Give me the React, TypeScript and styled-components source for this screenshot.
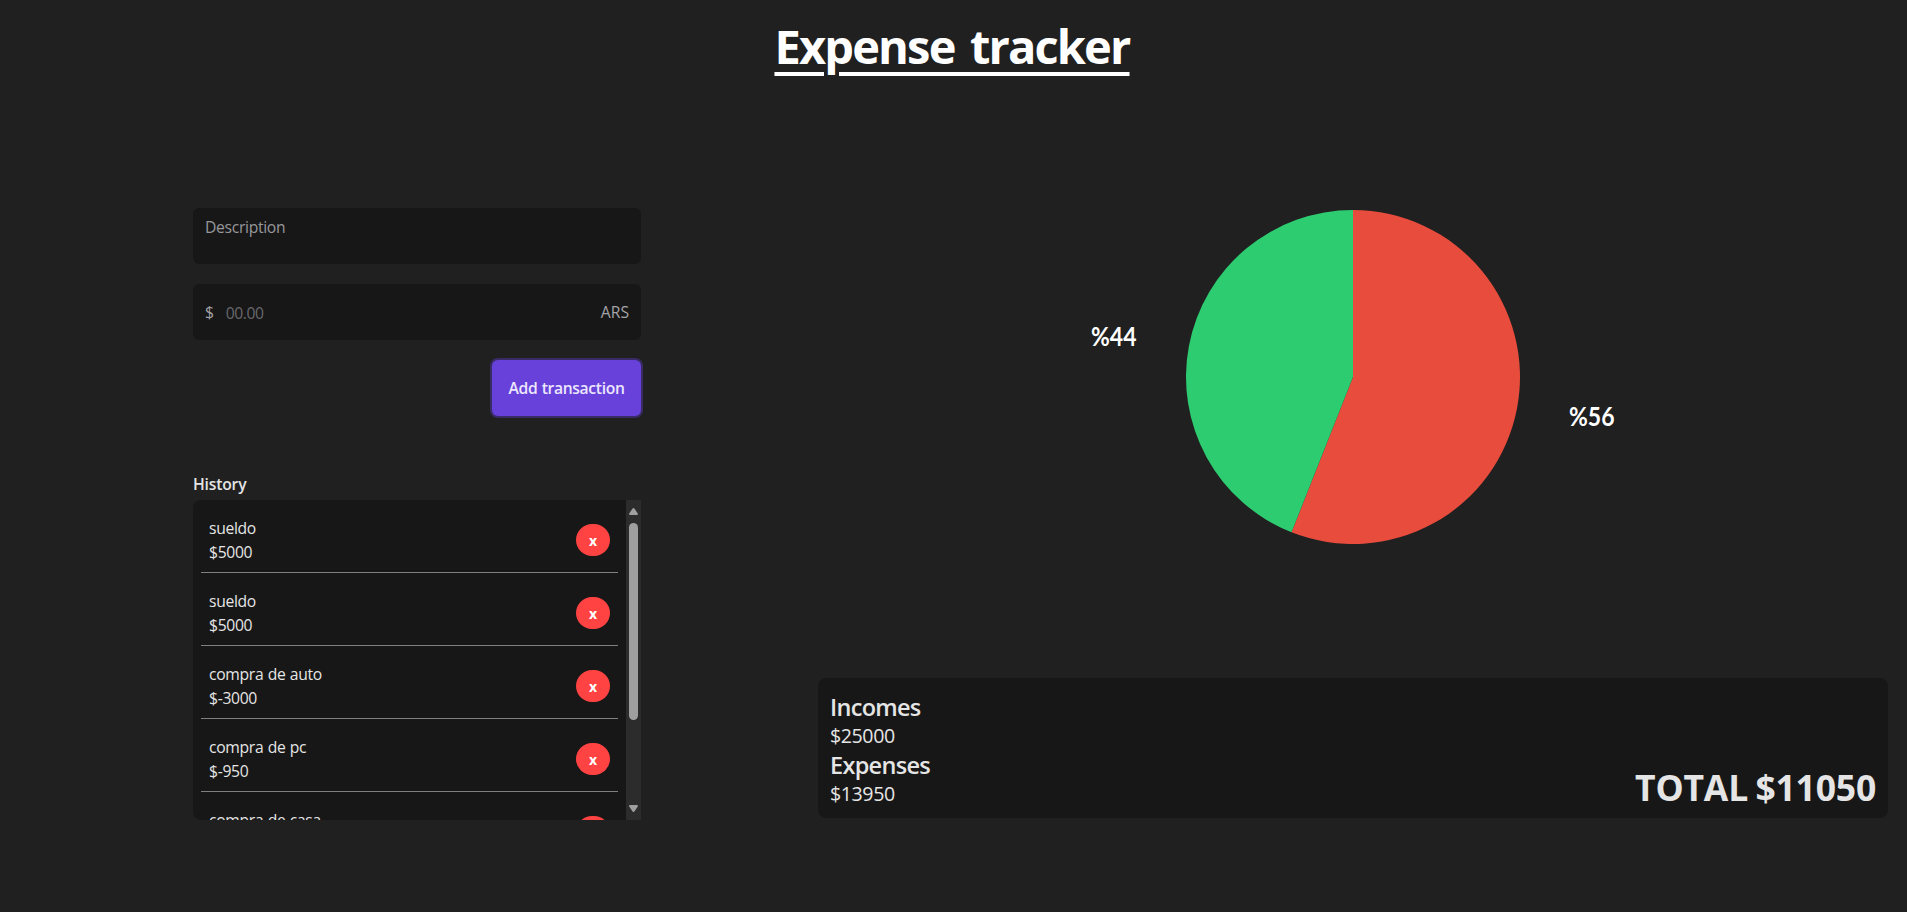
import React from "react";
import styled, { createGlobalStyle } from "styled-components";

const GlobalStyle = createGlobalStyle`
  *, *::before, *::after { box-sizing: border-box; }
  body {
    margin: 0;
    background: #202020;
    color: #e5e5e5;
    font-family: "Open Sans", "Noto Sans", sans-serif;
    font-size: 15.7px;
    line-height: 24px;
    letter-spacing: -0.32px;
    word-spacing: 0.6px;
  }
  h1, h2, h3, p, ul { margin: 0; padding: 0; }
`;

const Page = styled.div`
  min-height: 100vh;
  display: flex;
  flex-direction: column;
`;

const Header = styled.header`
  display: flex;
  justify-content: center;
  padding: 22px 3px 0 0;
  height: 177px;
`;

const Title = styled.h1`
  height: 48px;
  font-size: 47px;
  line-height: 48px;
  font-weight: 700;
  letter-spacing: -1.85px;
  word-spacing: 5px;
  color: #fff;
  text-decoration: underline;
  text-decoration-thickness: 4px;
  text-underline-offset: 8px;
`;

const Main = styled.main`
  display: flex;
  align-items: flex-start;
  gap: 177px;
  padding: 0 19px 0 193px;
`;

const Sidebar = styled.section`
  flex: 0 0 448px;
  display: flex;
  flex-direction: column;
  padding-top: 31px;
`;

const Form = styled.form`
  display: flex;
  flex-direction: column;
  gap: 20px;
  margin-bottom: 56px;
`;

const Description = styled.textarea`
  display: block;
  width: 100%;
  height: 56px;
  padding: 7px 12px;
  border: 0;
  border-radius: 6px;
  background: #171717;
  color: #e5e5e5;
  font: inherit;
  letter-spacing: inherit;
  resize: none;
  overflow: hidden;
  &::placeholder { color: #97979b; opacity: 1; }
`;

const AmountField = styled.label`
  display: flex;
  align-items: center;
  height: 56px;
  padding: 0 12px;
  border-radius: 6px;
  background: #171717;
  color: #a3a3a7;
`;

const AmountInput = styled.input`
  flex: 1;
  min-width: 0;
  margin-left: 12px;
  padding: 2px 0 0;
  border: 0;
  background: transparent;
  color: #e5e5e5;
  font: inherit;
  letter-spacing: -0.4px;
  &::placeholder { color: #68686c; opacity: 1; }
`;

const Currency = styled.span`
  letter-spacing: 0;
`;

const AddButton = styled.button`
  align-self: flex-end;
  width: 149px;
  height: 56px;
  padding: 0;
  border: 0;
  border-radius: 6px;
  background: #6741d9;
  box-shadow: 0 0 0 2px #392b66;
  color: #ece6fd;
  font: inherit;
  font-weight: 600;
  letter-spacing: -0.35px;
  word-spacing: 0.6px;
`;

const HistoryTitle = styled.h3`
  margin-bottom: 4px;
  font-size: 15.7px;
  line-height: 24px;
  font-weight: 600;
  letter-spacing: -0.2px;
`;

const HistoryPanel = styled.div`
  display: flex;
  height: 320px;
  border-radius: 8px 0 0 8px;
  background: #171717;
  overflow: hidden;
`;

const HistoryList = styled.ul`
  flex: 1;
  padding: 0 8px;
  list-style: none;
  overflow: hidden;
`;

const HistoryRow = styled.li`
  display: flex;
  align-items: center;
  justify-content: space-between;
  height: 65px;
  margin-top: 8px;
  padding: 0 8px;
  border-bottom: 1px solid #808080;
`;

const DeleteButton = styled.button`
  width: 34px;
  height: 32px;
  padding: 2px 0 0;
  border: 0;
  border-radius: 16px;
  background: #ff4242;
  color: #fff;
  font: inherit;
  font-size: 14px;
  line-height: 20px;
  font-weight: 700;
`;

const ScrollTrack = styled.div`
  flex: 0 0 15px;
  display: flex;
  flex-direction: column;
  align-items: center;
  padding: 8px 0;
  background: #2c2c2c;
`;

const ScrollArrow = styled.svg`
  display: block;
  width: 9px;
  height: 7px;
  fill: #9f9f9f;
`;

const ScrollThumb = styled.div`
  width: 9px;
  height: 197px;
  margin: 8px 0 auto;
  border-radius: 5px;
  background: #9f9f9f;
`;

const Overview = styled.section`
  flex: 1;
  display: flex;
  flex-direction: column;
  gap: 101px;
`;

const Chart = styled.svg`
  display: block;
  width: 100%;
  height: 400px;
`;

const ChartLabel = styled.text`
  fill: #fff;
  font-family: Lato, "Open Sans", sans-serif;
  font-size: 26px;
  font-weight: 700;
  letter-spacing: 0;
`;

const Summary = styled.div`
  display: flex;
  align-items: flex-end;
  justify-content: space-between;
  height: 140px;
  padding: 12px;
  border-radius: 8px;
  background: #171717;
`;

const SummaryTitle = styled.h2`
  font-size: 23.5px;
  line-height: 34px;
  font-weight: 600;
  letter-spacing: -0.7px;
`;

const SummaryValue = styled.p`
  font-size: 19.6px;
  line-height: 24px;
  letter-spacing: -0.42px;
`;

const Total = styled.p`
  padding-top: 1px;
  font-size: 35.5px;
  line-height: 38px;
  font-weight: 700;
  letter-spacing: -0.2px;
  word-spacing: -1.6px;
`;

const transactions = [
  { name: "sueldo", amount: 5000 },
  { name: "sueldo", amount: 5000 },
  { name: "compra de auto", amount: -3000 },
  { name: "compra de pc", amount: -950 },
  { name: "compra de casa", amount: -10000 },
];

const RADIUS = 167;

function slice(from: number, to: number) {
  const point = (share: number) => {
    const a = share * 2 * Math.PI;
    return `${RADIUS * Math.sin(a)} ${-RADIUS * Math.cos(a)}`;
  };
  const large = to - from > 0.5 ? 1 : 0;
  return `M0 0L${point(from)}A${RADIUS} ${RADIUS} 0 ${large} 1 ${point(to)}Z`;
}

function ExpenseChart() {
  return (
    <Chart viewBox="-535 -200 1070 400">
      <path d={slice(0, 0.56)} fill="#e74c3c" />
      <path d={slice(0.56, 1)} fill="#2ecc71" />
      <ChartLabel x={216} y={49} textLength={45.5} lengthAdjust="spacingAndGlyphs">%56</ChartLabel>
      <ChartLabel x={-262} y={-31} textLength={45.5} lengthAdjust="spacingAndGlyphs">%44</ChartLabel>
    </Chart>
  );
}

export default function App() {
  return (
    <Page>
      <GlobalStyle />
      <Header>
        <Title>Expense tracker</Title>
      </Header>
      <Main>
        <Sidebar>
          <Form onSubmit={(e) => e.preventDefault()}>
            <Description placeholder="Description" />
            <AmountField>
              <span>$</span>
              <AmountInput placeholder="00.00" />
              <Currency>ARS</Currency>
            </AmountField>
            <AddButton>Add transaction</AddButton>
          </Form>
          <HistoryTitle>History</HistoryTitle>
          <HistoryPanel>
            <HistoryList>
              {transactions.map((t, i) => (
                <HistoryRow key={i}>
                  <div>
                    <p>{t.name}</p>
                    <p>${t.amount}</p>
                  </div>
                  <DeleteButton>x</DeleteButton>
                </HistoryRow>
              ))}
            </HistoryList>
            <ScrollTrack>
              <ScrollArrow viewBox="0 0 9 7">
                <path d="M3.6 0.6Q4.5-0.4 5.4 0.6L8.8 5.4Q9.2 7 8 7H1Q-0.2 7 0.2 5.4Z" />
              </ScrollArrow>
              <ScrollThumb />
              <ScrollArrow viewBox="0 0 9 7">
                <path d="M3.6 6.4Q4.5 7.4 5.4 6.4L8.8 1.6Q9.2 0 8 0H1Q-0.2 0 0.2 1.6Z" />
              </ScrollArrow>
            </ScrollTrack>
          </HistoryPanel>
        </Sidebar>
        <Overview>
          <ExpenseChart />
          <Summary>
            <div>
              <SummaryTitle>Incomes</SummaryTitle>
              <SummaryValue>$25000</SummaryValue>
              <SummaryTitle>Expenses</SummaryTitle>
              <SummaryValue>$13950</SummaryValue>
            </div>
            <Total>TOTAL $11050</Total>
          </Summary>
        </Overview>
      </Main>
    </Page>
  );
}
